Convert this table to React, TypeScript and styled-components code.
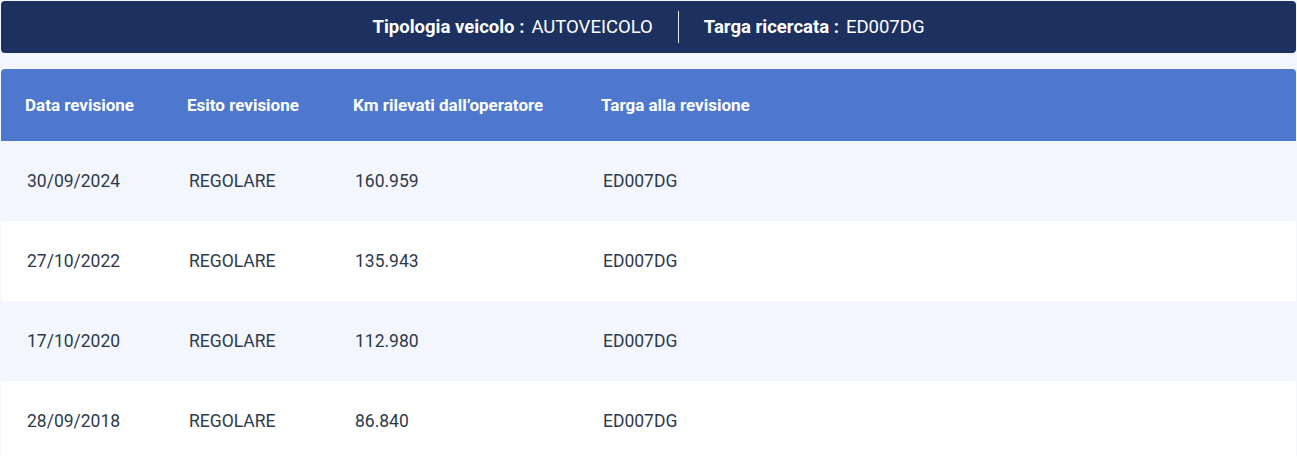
import React from 'react';
import styled, { createGlobalStyle } from 'styled-components';

interface Revisione {
  data: string;
  esito: string;
  km: string;
  targa: string;
}

const revisioni: Revisione[] = [
  { data: '30/09/2024', esito: 'REGOLARE', km: '160.959', targa: 'ED007DG' },
  { data: '27/10/2022', esito: 'REGOLARE', km: '135.943', targa: 'ED007DG' },
  { data: '17/10/2020', esito: 'REGOLARE', km: '112.980', targa: 'ED007DG' },
  { data: '28/09/2018', esito: 'REGOLARE', km: '86.840', targa: 'ED007DG' },
];

const GlobalStyle = createGlobalStyle`
  body {
    margin: 0;
    background: #f3f6fc;
    font-family: Roboto, "Noto Sans", sans-serif;
    color: #2e3a4b;
  }
`;

const App: React.FC = () => {
  return (
    <>
      <GlobalStyle />
      <Page>
        <InfoBar>
          <InfoItem>
            <Label>Tipologia veicolo :</Label>
            <Value>AUTOVEICOLO</Value>
          </InfoItem>
          <Divider />
          <InfoItem>
            <Label>Targa ricercata :</Label>
            <Value>ED007DG</Value>
          </InfoItem>
        </InfoBar>

        <Table>
          <HeadRow>
            <Th>Data revisione</Th>
            <Th>Esito revisione</Th>
            <Th>Km rilevati dall’operatore</Th>
            <Th>Targa alla revisione</Th>
          </HeadRow>
          {revisioni.map((r, index) => (
            <Row key={r.data} striped={index % 2 === 0}>
              <Td>{r.data}</Td>
              <Td>{r.esito}</Td>
              <Td>{r.km}</Td>
              <Td>{r.targa}</Td>
            </Row>
          ))}
        </Table>
      </Page>
    </>
  );
};

const Page = styled.div`
  display: flex;
  flex-direction: column;
  gap: 16px;
  padding: 1px 1px 0 1px;
`;

const InfoBar = styled.div`
  display: flex;
  justify-content: center;
  align-items: center;
  gap: 25px;
  height: 52px;
  background: #1d3161;
  border-radius: 4px;
  color: white;
`;

const InfoItem = styled.div`
  display: flex;
  align-items: baseline;
  gap: 7px;
  font-size: 18.5px;
`;

const Label = styled.span`
  font-weight: 700;
`;

const Value = styled.span`
  font-weight: 400;
`;

const Divider = styled.div`
  width: 1px;
  height: 32px;
  background: rgba(255, 255, 255, 0.9);
`;

const Table = styled.div`
  display: flex;
  flex-direction: column;
  border-radius: 4px 4px 0 0;
  overflow: hidden;
`;

const columns = '162px 166px 248px 1fr';

const HeadRow = styled.div`
  display: grid;
  grid-template-columns: ${columns};
  align-items: center;
  height: 72px;
  padding-left: 24px;
  background: #4e78cd;
  color: white;
`;

const Th = styled.div`
  font-size: 17px;
  font-weight: 700;
`;

const Row = styled.div<{ striped: boolean }>`
  display: grid;
  grid-template-columns: ${columns};
  align-items: center;
  height: 80px;
  padding-left: 26px;
  background: ${props => props.striped ? '#f3f6fc' : '#ffffff'};
`;

const Td = styled.div`
  font-size: 17.5px;
  font-weight: 400;
`;

export default App;
